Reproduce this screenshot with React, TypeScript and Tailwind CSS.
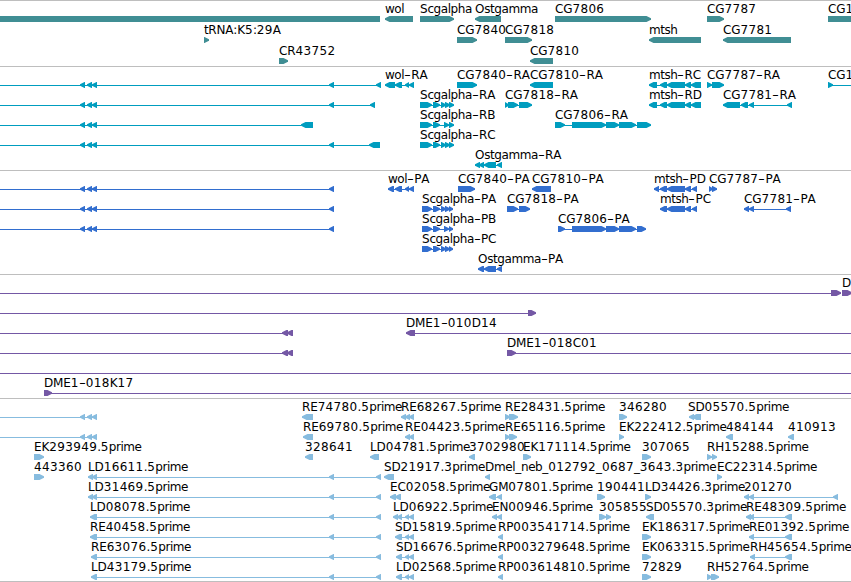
type Span = [number, number]

type Feature = {
  x: number
  label?: string
  dir?: 'left' | 'right'
  blocks: Span[]
  line?: Span
}

type TrackProps = {
  name: string
  color: string
  rows: Feature[][]
  rowClass?: string
  className?: string
}

const WIDTH = 851
const HEAD = 4.5

const UPSTREAM: Span[] = [[80, 85], [87, 92], [92, 97]]
const MTSH: Span[] = [[660, 667], [667, 685], [685, 691]]
const CG7806: Span[] = [[572, 606], [606, 619], [619, 636]]
const WOL_END: Span[] = [[405, 409], [409, 414]]
const FAR_END: Span[] = [[329, 334], [376, 381]]

function left(x: number, label: string, ...blocks: Span[]): Feature {
  return { x, label, dir: 'left', blocks }
}

function right(x: number, label: string, ...blocks: Span[]): Feature {
  return { x, label, dir: 'right', blocks }
}

// feature that starts outside the visible region
function incoming(end: number, ...blocks: Span[]): Feature {
  return { x: 0, dir: 'left', blocks: [...UPSTREAM, ...blocks], line: [0, end] }
}

const genes: Feature[][] = [
  [
    { x: 0, blocks: [[0, 380]] },
    left(385, 'wol', [385, 413]),
    right(420, 'Scgalpha', [420, 454]),
    left(475, 'Ostgamma', [475, 501]),
    right(555, 'CG7806', [555, 651]),
    right(707, 'CG7787', [707, 724]),
    right(828, 'CG1', [828, 870]),
  ],
  [
    right(204, 'tRNA:K5:29A', [204, 209]),
    right(457, 'CG7840', [457, 477]),
    right(505, 'CG7818', [505, 532]),
    left(649, 'mtsh', [649, 701]),
    left(723, 'CG7781', [723, 791]),
  ],
  [right(279, 'CR43752', [279, 288]), left(530, 'CG7810', [530, 553])],
]

const transcripts: Feature[][] = [
  [
    incoming(381, ...FAR_END),
    left(385, 'wol-RA', [385, 395], [395, 402], ...WOL_END),
    right(457, 'CG7840-RA', [457, 477]),
    left(530, 'CG7810-RA', [530, 553]),
    left(649, 'mtsh-RC', [649, 657], ...MTSH, [691, 701]),
    right(707, 'CG7787-RA', [707, 712], [712, 724]),
    { x: 828, label: 'CG1', dir: 'right', blocks: [[828, 833]], line: [828, 851] },
  ],
  [
    incoming(375, [329, 334], [370, 375]),
    right(420, 'Scgalpha-RA', [420, 432], [433, 440], [441, 446], [445, 450], [449, 454]),
    right(505, 'CG7818-RA', [505, 509], [508, 518], [519, 532]),
    left(649, 'mtsh-RD', [649, 657], ...MTSH, [691, 701]),
    left(723, 'CG7781-RA', [723, 740], [741, 748], [749, 754], [787, 792]),
  ],
  [
    incoming(301, [301, 313]),
    right(420, 'Scgalpha-RB', [420, 432], [433, 440], [444, 449], [449, 454]),
    right(555, 'CG7806-RA', [555, 565], ...CG7806, [637, 651]),
  ],
  [
    incoming(380, [329, 334], [369, 380]),
    right(420, 'Scgalpha-RC', [420, 432], [433, 440], [441, 446], [445, 450], [449, 454]),
  ],
  [left(475, 'Ostgamma-RA', [475, 480], [479, 484], [484, 496], [497, 502])],
]

const proteins: Feature[][] = [
  [
    incoming(334, [329, 334]),
    left(388, 'wol-PA', [388, 394], [395, 402], ...WOL_END),
    right(458, 'CG7840-PA', [458, 475]),
    left(532, 'CG7810-PA', [532, 551]),
    left(654, 'mtsh-PD', [654, 659], ...MTSH, [692, 697]),
    right(709, 'CG7787-PA', [709, 713], [712, 717]),
  ],
  [
    incoming(334, [329, 334]),
    right(422, 'Scgalpha-PA', [422, 432], [433, 440], [441, 446], [445, 450], [449, 453]),
    right(507, 'CG7818-PA', [507, 518], [519, 530]),
    left(660, 'mtsh-PC', ...MTSH, [692, 697]),
    left(744, 'CG7781-PA', [744, 749], [749, 754], [786, 791]),
  ],
  [
    incoming(334, [329, 334]),
    right(422, 'Scgalpha-PB', [422, 432], [433, 440], [444, 449], [449, 453]),
    right(558, 'CG7806-PA', [558, 565], ...CG7806, [637, 646]),
  ],
  [right(422, 'Scgalpha-PC', [422, 432], [433, 440], [441, 446], [445, 450], [449, 453])],
  [left(478, 'Ostgamma-PA', [478, 484], [484, 496], [497, 502])],
]

const clones: Feature[][] = [
  [
    { x: 0, dir: 'right', blocks: [[831, 841]], line: [0, 841] },
    right(842, 'D', [842, 852]),
  ],
  [{ x: 0, dir: 'right', blocks: [[528, 536]], line: [0, 536] }],
  [
    { x: 0, dir: 'left', blocks: [[282, 288], [287, 293]], line: [0, 293] },
    { x: 406, label: 'DME1-010D14', dir: 'left', blocks: [[406, 415]], line: [406, WIDTH] },
  ],
  [
    { x: 0, dir: 'left', blocks: [[282, 288], [287, 293]], line: [0, 293] },
    { x: 507, label: 'DME1-018C01', dir: 'right', blocks: [[507, 516]], line: [507, WIDTH] },
  ],
  [{ x: 0, blocks: [], line: [0, WIDTH] }],
  [{ x: 44, label: 'DME1-018K17', dir: 'right', blocks: [[44, 52]], line: [44, WIDTH] }],
]

const ests: Feature[][] = [
  [
    incoming(97),
    left(302, 'RE74780.5prime', [302, 313]),
    left(401, 'RE68267.5prime', [401, 406], [405, 410], [409, 414]),
    right(505, 'RE28431.5prime', [505, 510], [509, 518]),
    right(619, '346280', [619, 627]),
    left(688, 'SD05570.5prime', [689, 694], [692, 701]),
  ],
  [
    incoming(97),
    left(303, 'RE69780.5prime', [303, 313]),
    left(405, 'RE04423.5prime', [405, 410], [409, 414]),
    right(505, 'RE65116.5prime', [505, 510], [509, 517]),
    right(619, 'EK222412.5prime', [619, 624]),
    left(726, '484144', [726, 733]),
    left(788, '410913', [788, 794]),
  ],
  [
    right(34, 'EK293949.5prime', [34, 44]),
    left(305, '328641', [305, 313]),
    left(370, 'LD04781.5prime', [370, 379]),
    left(469, '3702980', [469, 475]),
    right(523, 'EK171114.5prime', [523, 531]),
    right(642, '307065', [642, 651]),
    right(707, 'RH15288.5prime', [707, 712], [712, 717]),
  ],
  [
    right(34, '443360', [34, 44]),
    left(88, 'LD16611.5prime', [88, 93], [92, 97], ...FAR_END),
    left(384, 'SD21917.3prime', [384, 394]),
    left(485, 'Dmel_neb_012792_0687_3643.3prime', [485, 490]),
    right(717, 'EC22314.5prime', [717, 722]),
  ],
  [
    left(88, 'LD31469.5prime', [88, 93], [92, 97], ...FAR_END),
    left(390, 'EC02058.5prime', [390, 396], [395, 401]),
    left(489, 'GM07801.5prime', [489, 496], [497, 502]),
    right(597, '190441', [597, 605]),
    right(645, 'LD34426.3prime', [645, 651]),
    left(744, '201270', [744, 749], [749, 754], [833, 838]),
  ],
  [
    left(90, 'LD08078.5prime', [90, 97], ...FAR_END),
    left(393, 'LD06922.5prime', [393, 398], [397, 402], ...WOL_END),
    left(492, 'EN00946.5prime', [492, 497], [497, 502]),
    right(599, '305855', [599, 606], [606, 611]),
    left(646, 'SD05570.3prime', [646, 654]),
    left(746, 'RE48309.5prime', [746, 751], [749, 754], [785, 792]),
  ],
  [
    left(90, 'RE40458.5prime', [90, 97], ...FAR_END),
    left(395, 'SD15819.5prime', [395, 402], ...WOL_END),
    left(498, 'RP003541714.5prime', [498, 503]),
    right(642, 'EK186317.5prime', [642, 651]),
    left(749, 'RE01392.5prime', [749, 754], [785, 792]),
  ],
  [
    left(91, 'RE63076.5prime', [91, 97], ...FAR_END),
    left(396, 'SD16676.5prime', [396, 402], ...WOL_END),
    left(498, 'RP003279648.5prime', [498, 503]),
    right(642, 'EK063315.5prime', [642, 651]),
    left(750, 'RH45654.5prime', [750, 755], [785, 792]),
  ],
  [
    left(91, 'LD43179.5prime', [91, 97], ...FAR_END),
    left(396, 'LD02568.5prime', [396, 402], ...WOL_END),
    left(498, 'RP003614810.5prime', [498, 503]),
    right(642, '72829', [642, 651]),
    right(707, 'RH52764.5prime', [707, 712], [711, 719]),
  ],
]

function blockPath([a, b]: Span, dir?: 'left' | 'right') {
  const head = Math.min(HEAD, b - a)
  if (dir === 'left') return `M${a} 2.2L${a + head} 0H${b}V6H${a + head}L${a} 3.8Z`
  if (dir === 'right') return `M${a} 0H${b - head}L${b} 2.2V3.8L${b - head} 6H${a}Z`
  return `M${a} 0H${b}V6H${a}Z`
}

function Glyph({ feature, color }: { feature: Feature; color: string }) {
  const { blocks, dir } = feature
  const [start, end] = feature.line ?? [blocks[0][0], blocks[blocks.length - 1][1]]
  return (
    <g fill={color}>
      <rect x={start} y={3} width={end - start} height={1} />
      {blocks.map((block) => (
        <path key={block[0]} d={blockPath(block, dir)} />
      ))}
    </g>
  )
}

function trackingClass(part: string) {
  if (/^\d/.test(part)) return 'tracking-[0.36px]'
  if (/^[a-z]/.test(part)) return 'tracking-[-0.45px]'
  if (part === '-') return 'inline-block scale-x-160 px-[1.4px]'
  return 'tracking-[-0.15px]'
}

// digits sit wider and lowercase letters tighter than the font's own advances
function Label({ x, text }: { x: number; text: string }) {
  const parts = text.match(/\d+|[a-z]+|-|[^\da-z-]+/g) ?? []
  return (
    <span className="absolute top-px leading-[15px] whitespace-nowrap" style={{ left: x }}>
      {parts.map((part, i) => (
        <span key={i} className={trackingClass(part)}>
          {part}
        </span>
      ))}
    </span>
  )
}

function Track({ name, color, rows, rowClass = 'h-5', className = 'pb-[3px]' }: TrackProps) {
  return (
    <section aria-label={name} className={`border-t border-[#bebebe] ${className}`}>
      {rows.map((features, i) => (
        <div key={i} className={`relative flex flex-col ${rowClass}`}>
          <div className="h-[15px] shrink-0">
            {features.map((f) => (f.label ? <Label key={f.x} x={f.x} text={f.label} /> : null))}
          </div>
          <svg width={WIDTH} height={6} className="block shrink-0" aria-hidden="true">
            {features.map((f) => (
              <Glyph key={f.x} feature={f} color={color} />
            ))}
          </svg>
        </div>
      ))}
    </section>
  )
}

export default function App() {
  return (
    <main className="h-[582px] w-[851px] overflow-hidden bg-white font-['DejaVu_Sans',sans-serif] text-[12px] text-black [font-kerning:none]">
      <Track name="Genes" color="#408e94" rows={genes} rowClass="h-[21px]" className="pb-0.5" />
      <Track name="Transcripts" color="#009dbf" rows={transcripts} />
      <Track name="Proteins" color="#326ecf" rows={proteins} />
      <Track name="Clones" color="#7458a5" rows={clones} />
      <Track name="ESTs" color="#87bcdf" rows={ests} className="border-b pb-0.5" />
    </main>
  )
}
